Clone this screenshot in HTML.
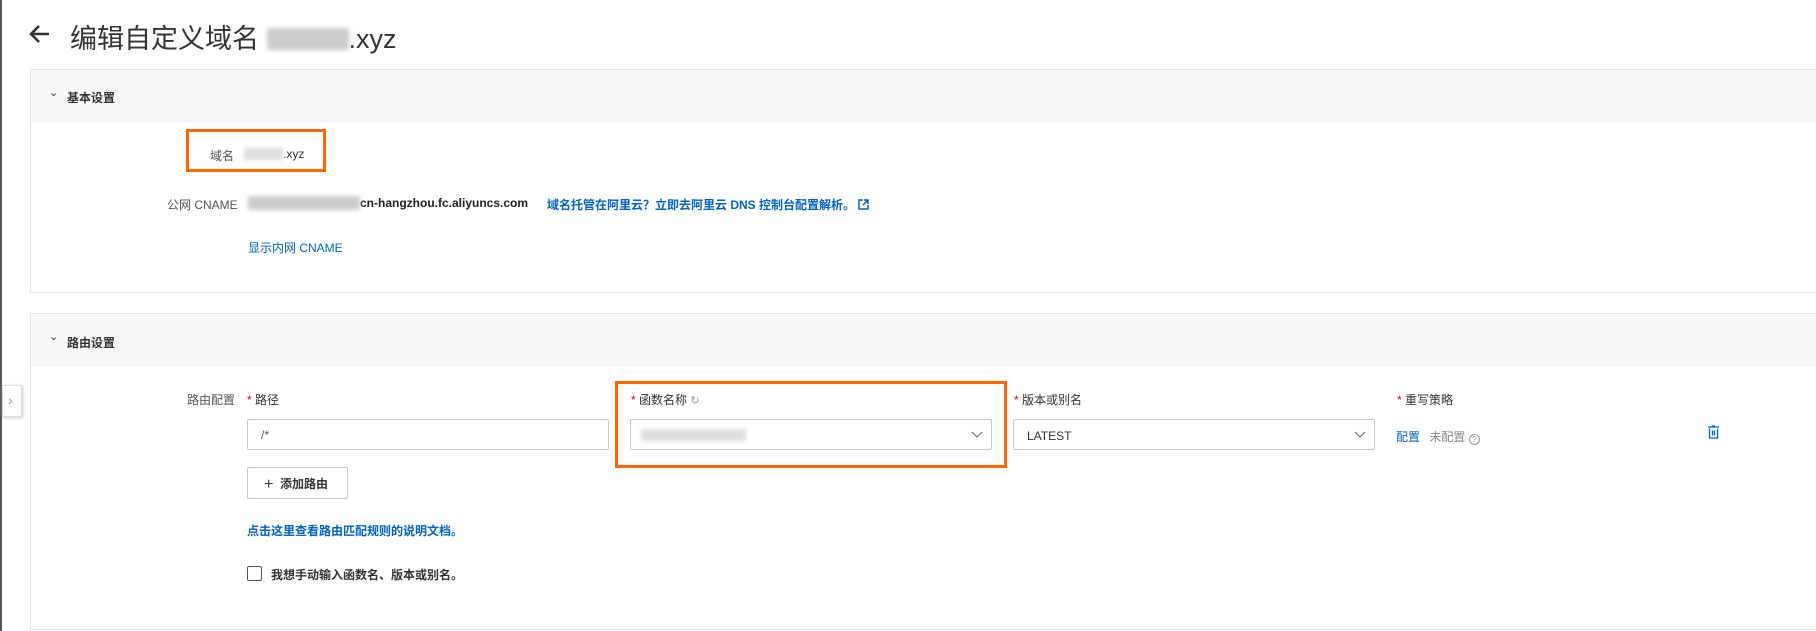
<!DOCTYPE html>
<html><head><meta charset="utf-8"><style>
*{box-sizing:border-box;margin:0;padding:0}
body{width:1816px;height:631px;overflow:hidden;background:#fff;font-family:"Liberation Sans","Noto Sans CJK SC",sans-serif;font-size:12px;color:#333;position:relative;border-left:2px solid #555}
.a{position:absolute;white-space:nowrap}
.card{position:absolute;left:28px;width:1800px;border:1px solid #e3e4e6}
.hd{background:#f7f8fa;height:53px;position:relative}
.blue{color:#0064c8}
.blur{background:#ddd;filter:blur(2px);display:inline-block}
.inp{position:absolute;border:1px solid #c7c9cc;border-radius:2px;background:#fff;height:31px}
.red{color:#e00}
</style></head><body>
<div class="a" style="left:26px;top:18px;font-size:28px;color:#333">
<svg width="24" height="24" viewBox="0 0 24 24" style="vertical-align:-3px"><path d="M21 12H4M11 4l-8 8 8 8" stroke="#333" stroke-width="2.6" fill="none"/></svg></div>
<div class="a" style="left:68px;top:17px;font-size:27px;color:#333">编辑自定义域名 <span class="blur" style="width:82px;height:22px;vertical-align:-2px;background:#ccc"></span>.xyz</div>

<div class="card" style="top:69px;height:224px">
<div class="hd" style="height:53px"><span class="a" style="left:18px;top:16px;font-size:11px">⌄</span><span class="a" style="left:36px;top:19px;font-weight:bold;color:#333">基本设置</span></div>
</div>
<div class="a" style="left:184px;top:129px;width:140px;height:43px;border:3px solid #f60"></div>
<div class="a" style="left:208px;top:147px;color:#555">域名</div>
<div class="a" style="left:242px;top:147px"><span class="blur" style="width:39px;height:12px;vertical-align:-2px"></span>.xyz</div>
<div class="a" style="left:165px;top:196px;color:#555">公网 CNAME</div>
<div class="a" style="left:246px;top:196px;color:#222;font-weight:bold"><span class="blur" style="width:112px;height:14px;vertical-align:-3px;background:#ccc"></span>cn-hangzhou.fc.aliyuncs.com</div>
<div class="a blue" style="left:545px;top:196px;font-weight:bold">域名托管在阿里云？立即去阿里云 DNS 控制台配置解析。 <svg width="11" height="11" viewBox="0 0 11 11" style="vertical-align:-1px"><path d="M5 1H1v9h9V6M6 1h4v4M10 1L5 6" stroke="#0064c8" stroke-width="1.5" fill="none"/></svg></div>
<div class="a blue" style="left:246px;top:239px">显示内网 CNAME</div>

<div class="card" style="top:313px;height:317px">
<div class="hd"><span class="a" style="left:18px;top:16px;font-size:11px">⌄</span><span class="a" style="left:36px;top:20px;font-weight:bold;color:#333">路由设置</span></div>
</div>
<div class="a" style="left:0;top:385px;width:20px;height:32px;border:1px solid #ddd;background:#fff;box-shadow:1px 1px 3px #ccc;color:#999;font-size:14px;padding:6px 0 0 5px">›</div>
<div class="a" style="left:185px;top:391px;color:#555">路由配置</div>
<div class="a" style="left:245px;top:391px"><span class="red">*</span> 路径</div>
<div class="inp" style="left:245px;top:419px;width:362px"><span class="a" style="left:13px;top:8px;color:#555">/*</span></div>
<div class="a" style="left:613px;top:381px;width:392px;height:87px;border:3px solid #f60"></div>
<div class="a" style="left:629px;top:391px"><span class="red">*</span> 函数名称 <span style="color:#999;font-size:11px">↻</span></div>
<div class="inp" style="left:628px;top:419px;width:362px"><span class="blur a" style="left:10px;top:9px;width:105px;height:12px"></span><svg class="a" style="right:8px;top:10px" width="12" height="10" viewBox="0 0 12 10"><path d="M1 2l5 5 5-5" stroke="#666" fill="none"/></svg></div>
<div class="a" style="left:1012px;top:391px"><span class="red">*</span> 版本或别名</div>
<div class="inp" style="left:1011px;top:419px;width:362px"><span class="a" style="left:13px;top:9px;color:#333">LATEST</span><svg class="a" style="right:8px;top:10px" width="12" height="10" viewBox="0 0 12 10"><path d="M1 2l5 5 5-5" stroke="#666" fill="none"/></svg></div>
<div class="a" style="left:1395px;top:391px"><span class="red">*</span> 重写策略</div>
<div class="a" style="left:1394px;top:428px"><span class="blue">配置</span> <span style="color:#888;margin-left:6px">未配置</span> <span style="display:inline-block;width:11px;height:11px;border:1px solid #999;border-radius:50%;font-size:8px;color:#999;text-align:center;line-height:10px;vertical-align:-1px">?</span></div>
<svg class="a" style="left:1706px;top:425px" width="11" height="14" viewBox="0 0 11 14"><path d="M0 2h11M4 1h3M1.5 3.5v9.5h8V3.5M4.5 5.5v5M6.5 5.5v5" stroke="#0064c8" stroke-width="1.3" fill="none"/></svg>
<div class="a" style="left:245px;top:467px;width:101px;height:32px;border:1px solid #c7c9cc;border-radius:2px;padding:7px 0 0 16px;color:#333"><span style="font-size:16px;vertical-align:-1px">+</span>&nbsp; <b>添加路由</b></div>
<div class="a blue" style="left:245px;top:522px;font-weight:bold">点击这里查看路由匹配规则的说明文档。</div>
<div class="a" style="left:245px;top:566px;width:15px;height:15px;border:1px solid #555;border-radius:2px"></div>
<div class="a" style="left:269px;top:566px;font-weight:bold;color:#333">我想手动输入函数名、版本或别名。</div>
</body></html>
